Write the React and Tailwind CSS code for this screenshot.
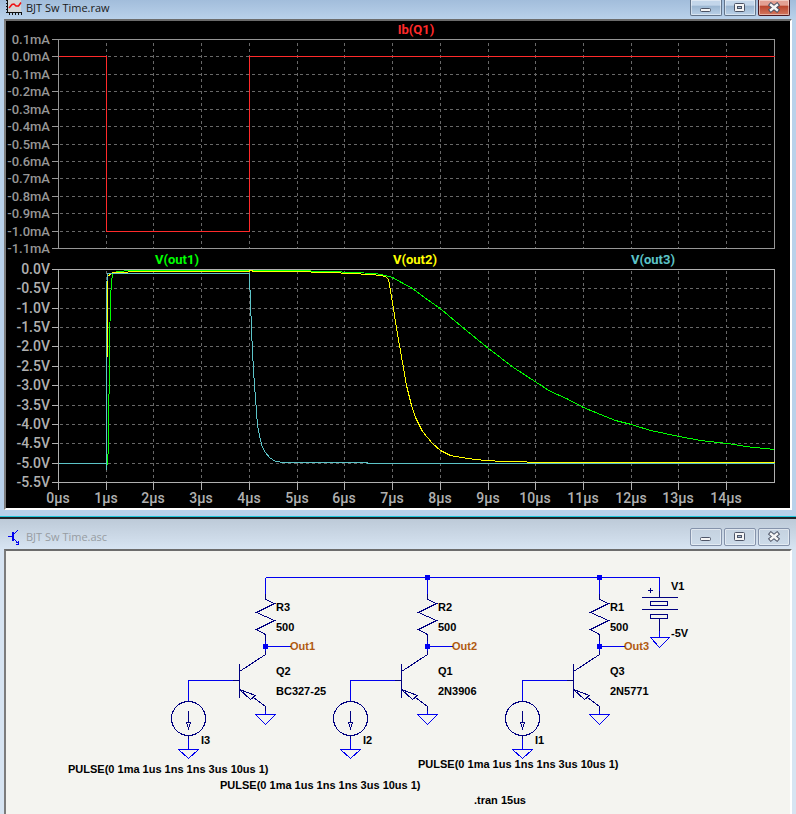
const UNIT = 716 / 15;
const gridX = Array.from({ length: 14 }, (_, i) => Math.round(57.9 + UNIT * (i + 1)));
const currentY = Array.from({ length: 13 }, (_, i) => Math.round(39 + (209 / 12) * i));
const voltageY = Array.from({ length: 12 }, (_, i) => Math.round(269 + (213 / 11) * i));

const stages = [
    { dx: 0, r: 'R3', out: 'Out1', q: 'Q2', model: 'BC327-25', src: 'I3' },
    { dx: 162, r: 'R2', out: 'Out2', q: 'Q1', model: '2N3906', src: 'I2' },
    { dx: 334, r: 'R1', out: 'Out3', q: 'Q3', model: '2N5771', src: 'I1' },
];

const WindowButton = ({ label, className, children }) => (
    <button type="button" aria-label={label} className={`flex w-8 items-center justify-center border shadow-[inset_0_0_0_1px_rgba(255,255,255,0.45)] ${className}`}>
        <svg width="14" height="12" viewBox="0 0 14 12" fill="none">{children}</svg>
    </button>
);

const WindowButtons = ({ active }) => {
    const shape = active ? 'h-4 rounded-b-xs border-t-0' : 'h-[18px] rounded-xs';
    const plain = active
        ? 'border-[#63748a] bg-linear-to-b from-[#c3d6ea] from-35% via-[#9bb6d1] via-40% to-[#bad1e8]'
        : 'border-[#8593ab] bg-linear-to-b from-[#c5d2e0] to-[#cddbe9]';
    const close = active
        ? 'border-[#4d1820] bg-linear-to-b from-[#e3a093] from-35% via-[#b9442c] via-40% to-[#d3775f]'
        : plain;
    const edge = active ? '#4a5264' : '#4f5668';

    return (
        <div className="flex gap-0.5">
            <WindowButton label="Minimize" className={`${shape} ${plain}`}>
                <rect x="1.5" y="6.5" width="10" height="3" rx="1" fill="#f5f5f5" stroke={edge} />
            </WindowButton>
            <WindowButton label="Maximize" className={`${shape} ${plain}`}>
                <rect x="1.5" y="1.5" width="10" height="8" rx="1" fill="#f5f5f5" stroke={edge} />
                <rect x="4.5" y="4.5" width="4" height="2" fill="#a9bdd5" stroke={edge} />
            </WindowButton>
            <WindowButton label="Close" className={`${shape} ${close}`}>
                <path d="M4 3 10 8M10 3 4 8" stroke={edge} strokeWidth="4.4" strokeLinecap="square" />
                <path d="M4 3 10 8M10 3 4 8" stroke="#f5f5f5" strokeWidth="2.4" strokeLinecap="square" />
            </WindowButton>
        </div>
    );
};

const PlotIcon = () => (
    <svg width="16" height="15" viewBox="0 0 16 15" fill="none">
        <path d="M2 0h13v12H2z" fill="#d6d6d6" />
        <path d="M1.5 0V12.5H16M0 .5h1M0 3.5h1M0 6.500h1M0 9.5h1M0 12.5h1M3.5 13v2M6.5 13v2M9.5 13v2M12.5 13v2M15.5 13v2" stroke="#111" shapeRendering="crispEdges" />
        <path d="M3 8 6 4.500 8 4l2 2h2.500L15 2.500" stroke="#f01010" strokeWidth="1.5" />
    </svg>
);

const TransistorIcon = () => (
    <svg width="12" height="16" viewBox="0 0 12 16" fill="none" shapeRendering="crispEdges" stroke="#0000f0">
        <path d="M0 7.5h4" />
        <path d="M4.5 3v9" strokeWidth="2" />
        <path d="M5 6 10 1M5 9l5 5M10.500 12v3H7.500M8 13h2" />
    </svg>
);

const Plot = () => (
    <svg viewBox="6 21 784 487" className="block h-auto w-full bg-black" role="img" aria-label="Waveforms">
        <g transform="translate(0.5 0.5)" fill="none" shapeRendering="crispEdges">
            <g stroke="#686868" strokeDasharray="3 3">
                {gridX.map((x) => (
                    <path key={x} d={`M${x} 42V248M${x} 270V482`} />
                ))}
                {currentY.slice(1, -1).map((y) => (
                    <path key={y} d={`M59 ${y}H774`} />
                ))}
                {voltageY.slice(1, -1).map((y) => (
                    <path key={y} d={`M59 ${y}H774`} />
                ))}
            </g>
            <g stroke="#969696">
                <path d="M58 39H774V248H58Z" />
                {currentY.map((y) => (
                    <path key={y} d={`M51 ${y}H58`} />
                ))}
            </g>
            <g stroke="#b0b0b0">
                <path d="M58 269H774V482H58Z" />
                {voltageY.map((y) => (
                    <path key={y} d={`M51 ${y}H58`} />
                ))}
                {[58, ...gridX].map((x) => (
                    <path key={x} d={`M${x} 482V489`} />
                ))}
            </g>

            <path stroke="#ff2a2a" d="M58 56H106V231H249V56H774" />
            <path stroke="#00ff00" d="M107 465 108 443 109 347 110 297 111 282 112 273 117 271 131 270H290L330 271 375 273 385 275 392 277 401 282 412 288 424 297 441 309 461 326 488 348 513 367 536 382 550 391 566 398 583 407 600 414 615 420 631 424 650 430 679 436 700 440 727 443 745 446 774 449" />
            <path stroke="#ffff00" d="M107 356V276L112 272H124L131 271H249V270H252V271H290L330 272 370 274 380 275 385 276 388 279 390 290 392 302 396 328 402 362 406 385 411 405 415 417 422 431 432 443 440 450 450 455 467 458 485 460 503 461 549 462H774" />
            <path stroke="#5cc4c8" d="M58 463H106V469V288L107 273H249V278L250 300 251 330 252 350 253 370 255 398 257 425 260 440 262 447 265 452 269 457 275 461 284 462H367V463H774" />
            <path stroke="#ffff00" d="M549 462H774" />
        </g>

        <g fontFamily="Roboto, 'Liberation Sans', sans-serif" fontSize="14" fontWeight="500">
            <g fill="#969696" textAnchor="end" fontSize="13">
                {currentY.map((y, i) => (
                    <text key={y} x="50" y={y + 5}>{((1 - i) / 10).toFixed(1)}mA</text>
                ))}
            </g>
            <g fill="#b0b0b0" textAnchor="end">
                {voltageY.map((y, i) => (
                    <text key={y} x="50" y={y + 5}>{i ? (-i / 2).toFixed(1) : '0.0'}V</text>
                ))}
            </g>
            <g fill="#b0b0b0" textAnchor="middle">
                {[58, ...gridX].map((x, i) => (
                    <text key={x} x={x} y="503">{i}µs</text>
                ))}
            </g>
            <g textAnchor="middle" fontSize="13" fontWeight="700">
                <text x="416" y="34" fill="#ff2a2a">Ib(Q1)</text>
                <text x="177" y="264" fill="#00ff00">V(out1)</text>
                <text x="415" y="264" fill="#ffff00">V(out2)</text>
                <text x="653" y="264" fill="#5cc4c8">V(out3)</text>
            </g>
        </g>
    </svg>
);

const Stage = ({ dx, r, out, q, model, src }) => (
    <g transform={`translate(${dx} 0)`}>
        <g transform="translate(0.5 0.5)" fill="none" shapeRendering="crispEdges">
            {/* wires and grounds */}
            <path stroke="#0000f0" d="M265 577V593M265 640V650M265 646H290M188 701V680H232M265 710V714M255 714H275L265 724ZM188 738V749M178 749H198L188 758Z" />
            {/* symbols */}
            <path stroke="#000080" d="M265 593V599L274 603 256 612 274 620 256 629 265 634V640M265 650V654L239 671M239 663V697M232 680H239M239 689 255 695 250 699ZM253 697 265 706V710M188 710V722M186 722H190L188 728ZM188 735V738" />
            <circle cx="188" cy="718" r="17" stroke="#000080" />
        </g>
        <path fill="#0000f0" d="M263 644h5v5h-5z" />
        <text x="276" y="611">{r}</text>
        <text x="276" y="631">500</text>
        <text x="290" y="650" fill="#b05a10">{out}</text>
        <text x="276" y="675">{q}</text>
        <text x="276" y="695">{model}</text>
        <text x="201" y="744">{src}</text>
    </g>
);

const Schematic = () => (
    <svg viewBox="6 551 784 263" className="block h-auto w-full" role="img" aria-label="Schematic" fontFamily="'Liberation Sans', Arial, sans-serif" fontSize="11" fontWeight="700" fill="#000">
        <g transform="translate(0.5 0.5)" fill="none" shapeRendering="crispEdges">
            <path stroke="#0000f0" d="M265 577H659V590M659 630V637M650 637H669L659 647Z" />
            <path stroke="#000080" d="M659 590V597M641 597H677M650 601H667V605H650ZM641 609H677M650 614H667V618H650ZM659 618V630" />
        </g>
        <path fill="#000080" d="M648 590h5v1h-5zM650 588h1v5h-1z" />
        <path fill="#0000f0" d="M425 575h5v5h-5zM597 575h5v5h-5z" />
        {stages.map((stage) => (
            <Stage key={stage.q} {...stage} />
        ))}
        <text x="671" y="590">V1</text>
        <text x="671" y="637">-5V</text>
        <text x="68" y="773">PULSE(0 1ma 1us 1ns 1ns 3us 10us 1)</text>
        <text x="220" y="789">PULSE(0 1ma 1us 1ns 1ns 3us 10us 1)</text>
        <text x="418" y="768">PULSE(0 1ma 1us 1ns 1ns 3us 10us 1)</text>
        <text x="474" y="804">.tran 15us</text>
    </svg>
);

const App = () => (
    <div className="flex min-h-screen flex-col font-['Open_Sans',sans-serif] text-[11px] leading-4">
        <section className="border-b border-[#22c8dc] bg-[#b9d1ea] pb-1.5">
            <header className="flex h-[19px] items-start justify-between bg-linear-to-b from-[#a2bddb] to-[#b9d1ea] px-1.5 text-[#1a1a1a]">
                <div className="flex items-start gap-1">
                    <PlotIcon />
                    <h1>BJT Sw Time.raw</h1>
                </div>
                <WindowButtons active />
            </header>
            <div className="mx-1 border-2 border-t-[#6c6c6c] border-r-white border-b-white border-l-[#7c7c7c]">
                <Plot />
            </div>
        </section>

        <section className="flex flex-1 flex-col border-t-2 border-[#202428] bg-[#d7e4f2]">
            <header className="flex h-[30px] items-center justify-between bg-linear-to-b from-[#bdcad8] to-[#d7e4f2] pt-1.5 pr-1.5 pl-2 text-[#979ca2]">
                <div className="flex items-center gap-1.5">
                    <TransistorIcon />
                    <h2>BJT Sw Time.asc</h2>
                </div>
                <WindowButtons />
            </header>
            <div className="mx-1 flex-1 border-2 border-b-0 border-t-[#6c6c6c] border-r-white border-l-[#7c7c7c] bg-[#f4f4f0]">
                <Schematic />
            </div>
        </section>
    </div>
);

export default App;
